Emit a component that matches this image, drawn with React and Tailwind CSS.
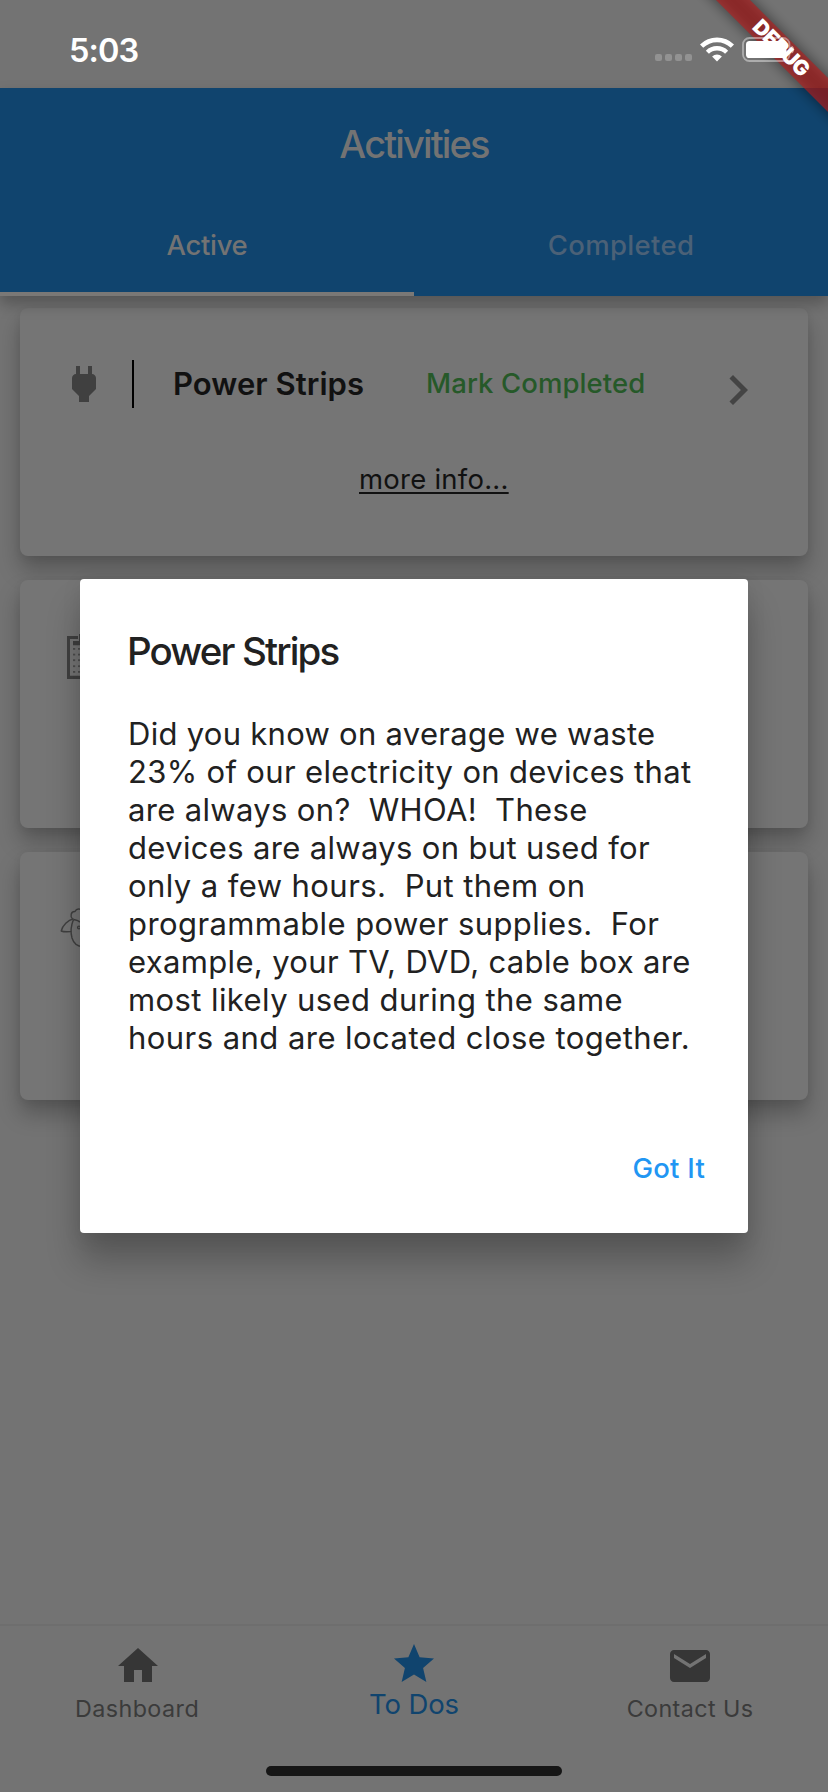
function StatusOverlay() {
  return (
    <div className="absolute inset-x-0 top-0 z-40 flex h-[88px] justify-between pl-[69px] pr-[32px] pt-[30px]">
      <span className="mt-px h-10 text-[32.5px] font-semibold leading-10 tracking-[-0.95px] text-white">5:03</span>
      <div className="flex pt-[7px]">
        <div className="mr-[38.5px] mt-[17px] flex gap-[3px]">
          <i className="size-[7px] rounded-[2px] bg-[#929292]" />
          <i className="size-[7px] rounded-[2px] bg-[#929292]" />
          <i className="size-[7px] rounded-[2px] bg-[#929292]" />
          <i className="size-[7px] rounded-[2px] bg-[#929292]" />
        </div>
        <svg className="-ml-[30px] h-[25px] w-[34px]" viewBox="0 0 34 25" fill="none">
          <path d="M1.6 9.2a22 22 0 0 1 30.8 0" stroke="#fff" strokeWidth="4.6" />
          <path d="M7.4 15.2a13.6 13.6 0 0 1 19.2 0" stroke="#fff" strokeWidth="4.4" />
          <path d="M17 24.4l-4.9-4.9a7 7 0 0 1 9.8 0z" fill="#fff" />
        </svg>
        <svg className="ml-2 h-[25px] w-[54px]" viewBox="0 0 54 25" fill="none">
          <rect x="1" y="1" width="46.5" height="23" rx="6.5" stroke="#fff" strokeOpacity="0.42" strokeWidth="1.8" />
          <rect x="4" y="4" width="40.5" height="17" rx="3.6" fill="#fff" />
          <path d="M49.5 8.4c3.4 1.2 3.4 7 0 8.2z" fill="#fff" fillOpacity="0.5" />
        </svg>
      </div>
    </div>
  );
}

function AppBar() {
  return (
    <div className="relative z-10 mt-[88px] h-[208px] shrink-0 bg-[#10446e] text-[#737373] shadow-[0_8px_14px_0_rgba(0,0,0,0.26)]">
      <h1 className="flex h-28 items-center justify-center text-[38px] font-[550] leading-[48px] tracking-[-1.85px]">
        Activities
      </h1>
      <div className="grid h-24 grid-cols-2 text-[27.5px] font-medium leading-8">
        <div className="flex flex-col border-b-4 border-[#7a7876]">
          <span className="flex h-[90px] items-center justify-center tracking-[-0.34px]">Active</span>
        </div>
        <div className="flex h-[90px] items-center justify-center tracking-[0.35px] text-[#4b6177]">Completed</div>
      </div>
    </div>
  );
}

function Card({ children }) {
  return (
    <section className="h-[248px] shrink-0 rounded-lg bg-[#757575] shadow-[0_14px_22px_0_rgba(0,0,0,0.25),0_2px_8px_0_rgba(0,0,0,0.06)]">
      {children}
    </section>
  );
}

function PlugIcon() {
  return (
    <svg className="size-12" viewBox="0 0 24 24" fill="#404040">
      <path d="M16.01 7L16 3h-2v4h-4V3H8v4h-.01C7 6.99 6 7.99 6 8.99v5.49L9.5 18v3h5v-3l3.5-3.51v-5.5c0-1-1-2-1.99-1.99z" />
    </svg>
  );
}

function ReceiptIcon() {
  const rows = [16, 21.7, 27.3, 33.3, 39];
  const cols = [13, 18, 23, 28, 33];
  return (
    <svg className="size-12" viewBox="0 0 48 48" fill="#404040">
      <path d="M7 4h11v3h-8v36.700h28V7h-8.500V4H41v43H7z" />
      <path d="M13 9h6V2h10v7h6v4.300H13z" />
      {rows.map((y) => cols.map((x) => <rect key={`${x}-${y}`} x={x} y={y} width="2.2" height="1.8" opacity="0.75" />))}
    </svg>
  );
}

function SheepIcon() {
  return (
    <svg className="size-12" viewBox="0 0 48 48" fill="none" stroke="#404040" strokeWidth="1.4" strokeLinejoin="round">
      <path d="M12.500 14.800c-2.500-2.200-1.800-7.500 2.500-7.300 1.500-3.200 5.500-3.300 7.500-.8 2-2.200 5.500-2 7 .8 4.300-.2 5.500 5 2.500 7.300" />
      <path d="M13.500 15.500c2 .8 4 .2 5.500 2 3 1.500 6-1.500 8 0 2-1.500 3.500-1 5.500-2" />
      <path d="M13.500 14.800C8 16 2.500 21.500 1.200 27c2.800 1.200 6.800.8 10 .6" />
      <path d="M32.500 14.800C38 16 43.500 21.500 44.800 27c-2.800 1.200-6.800.8-10 .6" />
      <path d="M13.500 15.500c-2.500 6-3 13-1.500 18.500C13.500 39 17 42.500 23 42.500S32.500 39 34 34c1.500-5.500 1-12.500-1.500-18.500" />
      <circle cx="19" cy="23.500" r="1.400" />
      <circle cx="27" cy="23.500" r="1.400" />
    </svg>
  );
}

function ActivityList() {
  return (
    <main className="flex flex-1 flex-col gap-6 px-5 pt-3">
      <Card>
        <div className="flex h-[112px] items-start pl-10 pt-[52px] leading-[48px]">
          <PlugIcon />
          <i className="ml-6 h-12 w-0.5 bg-black" />
          <h2 className="ml-[39px] w-[253px] text-[31px] font-semibold tracking-[0.06px] text-[#111]">Power Strips</h2>
          <span className="-mt-px w-[282px] text-[27.5px] font-medium tracking-[0.1px] text-[#265929]">Mark Completed</span>
          <svg className="size-[60px] shrink-0" viewBox="0 0 24 24" fill="#444">
            <path d="M10 6L8.59 7.41 13.17 12l-4.58 4.59L10 18l6-6z" />
          </svg>
        </div>
        <div className="mt-[43px] pl-[339px] text-[27.5px] leading-8 tracking-[0.24px] text-[#111]">
          <a className="underline decoration-[1.5px] underline-offset-[3px]">more info...</a>
        </div>
      </Card>
      <Card>
        <div className="pl-10 pt-[52px]">
          <ReceiptIcon />
        </div>
      </Card>
      <Card>
        <div className="pl-10 pt-[52px]">
          <SheepIcon />
        </div>
      </Card>
    </main>
  );
}

function BottomNav() {
  return (
    <nav className="flex h-[168px] shrink-0 flex-col border-t-2 border-[#6e6e6e] bg-[#737373] text-[#3b3b3b]">
      <div className="grid h-[140px] grid-cols-3">
        <div className="flex flex-col items-center pt-4">
          <svg className="size-12" viewBox="0 0 24 24" fill="#363636">
            <path d="M10 20v-6h4v6h5v-8h3L12 3 2 12h3v8z" />
          </svg>
          <span className="mt-[5px] pr-0.5 text-[23.3px] leading-7 tracking-[0.45px]">Dashboard</span>
        </div>
        <div className="flex flex-col items-center pt-3.5 text-[#10446e]">
          <svg className="size-12" viewBox="0 0 24 24" fill="currentColor">
            <path d="M12 17.27L18.18 21l-1.640-7.030L22 9.240l-7.190-.61L12 2 9.190 8.630 2 9.240l5.460 4.730L5.820 21z" />
          </svg>
          <span className="text-[27.5px] leading-8 tracking-[-0.13px]">To Dos</span>
        </div>
        <div className="flex flex-col items-center pt-4">
          <svg className="size-12" viewBox="0 0 24 24" fill="#363636">
            <path d="M20 4H4c-1.100 0-1.990.9-1.990 2L2 18c0 1.100.9 2 2 2h16c1.100 0 2-.9 2-2V6c0-1.100-.9-2-2-2zm0 4l-8 5-8-5V6l8 5 8-5v2z" />
          </svg>
          <span className="mt-[5px] text-[23.3px] leading-7 tracking-[0.4px]">Contact Us</span>
        </div>
      </div>
      <i className="mx-auto h-2.5 w-[296px] rounded-full bg-[#161616]" />
    </nav>
  );
}

function InfoDialog() {
  return (
    <div
      role="dialog"
      className="absolute left-20 top-[579px] z-20 flex h-[654px] w-[668px] flex-col rounded-[4px] bg-white px-12 pt-12 text-[#212121] shadow-[0_28px_34px_0_rgba(0,0,0,0.24),0_4px_20px_0_rgba(0,0,0,0.08)]"
    >
      <h2 className="-ml-px text-[38.5px] font-medium leading-[48px] tracking-[-1.86px]">Power Strips</h2>
      <div className="mt-10 flex flex-col whitespace-pre text-[31px] leading-[38px] tracking-[0.34px]">
        <span className="tracking-[0.28px]">Did you know on average we waste</span>
        <span>23% of our electricity on devices that</span>
        <span>are always on?  WHOA!  These</span>
        <span>devices are always on but used for</span>
        <span className="tracking-[0.42px]">only a few hours.  Put them on</span>
        <span className="tracking-[0.41px]">programmable power supplies.  For</span>
        <span>example, your TV, DVD, cable box are</span>
        <span className="tracking-[0.41px]">most likely used during the same</span>
        <span className="tracking-[0.45px]">hours and are located close together.</span>
      </div>
      <button className="-mr-[5px] mt-[95px] self-end text-[27.5px] font-medium leading-8 tracking-[0.25px] text-[#2196f3]">
        Got It
      </button>
    </div>
  );
}

function DebugBanner() {
  return (
    <div className="absolute right-0 top-0 z-30 size-[180px] overflow-hidden">
      <div className="absolute left-[-17px] top-[36px] h-[24px] w-[300px] rotate-45 bg-black/50 blur-[7px]" />
      <div className="absolute left-[-17px] top-[36px] flex h-[24px] w-[300px] rotate-45 items-center justify-center bg-[#b71c1c]/63 text-[21px] font-black leading-6 tracking-[-0.6px] text-white">
        DEBUG
      </div>
    </div>
  );
}

export default function App() {
  return (
    <div className="relative flex h-[1792px] w-[828px] flex-col overflow-hidden bg-[#737373] font-['Inter',sans-serif]">
      <AppBar />
      <ActivityList />
      <BottomNav />
      <InfoDialog />
      <DebugBanner />
      <StatusOverlay />
    </div>
  );
}
